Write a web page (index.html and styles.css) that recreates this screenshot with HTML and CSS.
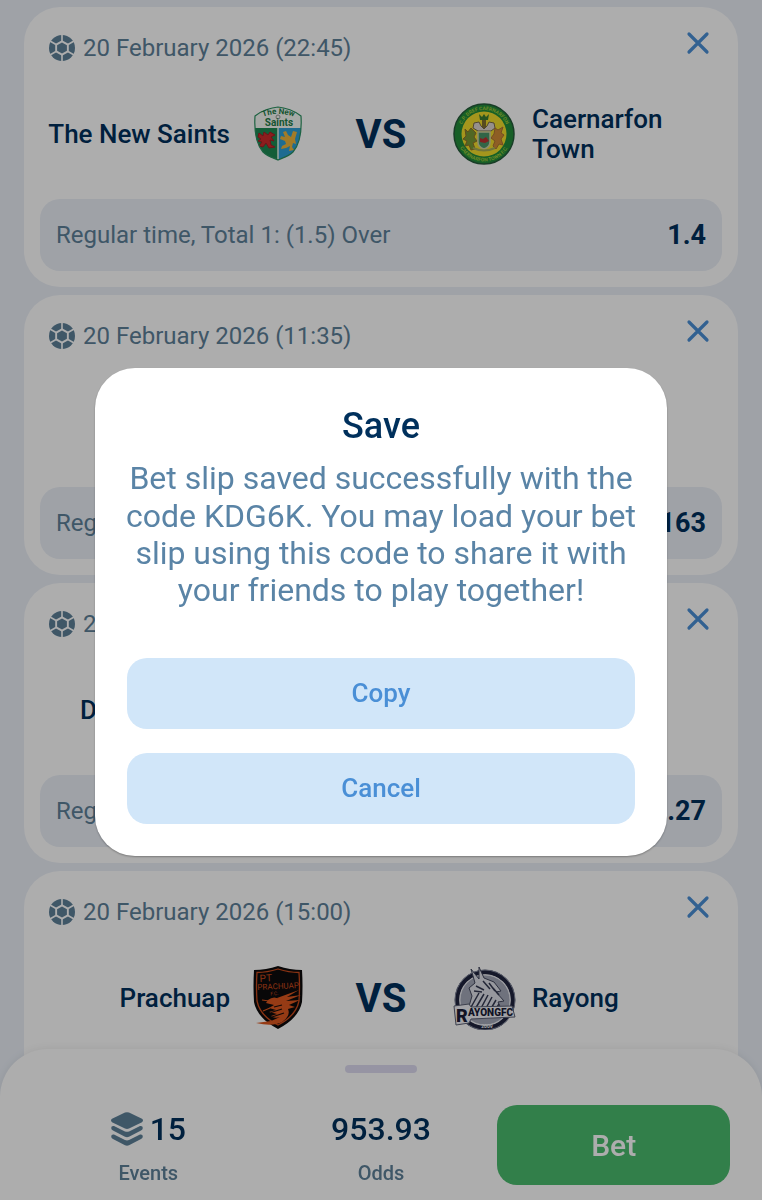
FILE: index.html
```html
<!DOCTYPE html>
<html lang="en">
<head>
<meta charset="utf-8">
<meta name="viewport" content="width=device-width, initial-scale=1">
<title>Bet slip</title>
<link rel="stylesheet" href="styles.css">
</head>
<body>
<svg class="sprite" aria-hidden="true">
  <symbol id="ball" viewBox="0 0 26 26">
    <circle cx="13" cy="13" r="13" fill="#5d8099"/>
    <path d="M13 5.2 19.8 9.1V16.9L13 20.8 6.2 16.9V9.1Z" fill="#fff"/>
    <path d="M13 0V6M13 20V26M19 9.5 25 6M19 16.5 25 20M7 9.5 1 6M7 16.5 1 20" stroke="#fff" stroke-width="1.6"/>
    <path d="M13 7.4 17.900 10.2V15.800L13 18.600 8.100 15.800V10.2Z" fill="#5d8099"/>
  </symbol>
  <symbol id="cross" viewBox="0 0 24 24">
    <path d="M3 3 21 21M21 3 3 21" stroke="#4a8fd6" stroke-width="3.2" stroke-linecap="round"/>
  </symbol>
</svg>

<main class="slip">
  <article class="card">
    <header class="card-head">
      <svg class="ball"><use href="#ball"/></svg>
      <time class="date">20 February 2026 (22:45)</time>
      <button class="close" aria-label="Remove event"><svg><use href="#cross"/></svg></button>
    </header>
    <div class="teams">
      <span class="team home">The New Saints</span>
      <svg class="crest" viewBox="0 0 64 64" role="img" aria-label="The New Saints crest">
        <path d="M32 5C25 5.500 15 9 9 14 8 30 11 43 17 50 22 55 28 56 32 58 36 56 42 55 47 50 53 43 56 30 55 14 49 9 39 5.500 32 5Z" fill="#f5faf5"/>
        <path d="M9 26H32V58C28 56 22 55 17 50 12 43 9 35 9 26Z" fill="#1c8a53"/>
        <path d="M32 26H55C55 35 52 43 47 50 42 55 36 56 32 58Z" fill="#2d9fd6"/>
        <path d="M13 31l4 3 1-4 4 3 2-3 5 3-4 2 3 4-4-1 1 5 4 2-6 1-3-5-3 4-4-1 3-4-4-1 3-2-3-2Z" fill="#cf2c2c" stroke="#a31e25"/>
        <path d="M37 30l3-1 2 4 3 2 2-6 4 1-2 7 1 5-3-1-1 4 2 3-5 1 1-5-4 2-5 1 1-3 4-2-1-3-5-2 1-3 4 1Z" fill="#efb63b"/>
        <path d="M32 26V57" stroke="#e3f3e4" stroke-width="1.500"/>
        <path d="M32 5C25 5.500 15 9 9 14 8 30 11 43 17 50 22 55 28 56 32 58 36 56 42 55 47 50 53 43 56 30 55 14 49 9 39 5.500 32 5Z" fill="none" stroke="#2b9160" stroke-width="1.200"/>
        <path id="saints-arc" d="M14 16Q32 8 51 16" fill="none"/>
        <text class="mark green small"><textPath href="#saints-arc" startOffset="50%" text-anchor="middle">The New</textPath></text>
        <circle cx="32" cy="15" r="2" fill="none" stroke="#999"/>
        <text class="mark green" x="33" y="24" text-anchor="middle">Saints</text>
      </svg>
      <span class="vs">VS</span>
      <svg class="crest" viewBox="0 0 64 64" role="img" aria-label="Caernarfon Town crest">
        <circle cx="32" cy="32" r="30" fill="#228c3a" stroke="#255b3a" stroke-width="1.500"/>
        <circle cx="32" cy="32" r="22.500" fill="#f2de2b"/>
        <path id="town-top" d="M8 32A24 24 0 0 1 56 32" fill="none"/>
        <path id="town-bottom" d="M4.500 32A27.500 27.500 0 0 0 59.500 32" fill="none"/>
        <text class="mark lime tiny"><textPath href="#town-top" startOffset="50%" text-anchor="middle">C.P. DREF CAERNARFON</textPath></text>
        <text class="mark lime tiny"><textPath href="#town-bottom" startOffset="50%" text-anchor="middle">CAERNARFON TOWN F.C.</textPath></text>
        <path d="M27 12l3 3 2-3 2 3 3-3-1 6h-8Z" fill="#3b7d30"/>
        <path d="M32 18v8" stroke="#80702f" stroke-width="4"/>
        <path d="M22 21l5-1 2 4 3 3 3-3 2-4 5 1 1 5-4 3H26l-5-3Z" fill="#ddd5cf" stroke="#76674a"/>
        <path d="M13 27l3 3 3-4 5 5-2 4 3 4-4 2 2 6-4 1-2-5-4 1 2-5-4-2 3-3Z" fill="#789834" stroke="#927028"/>
        <path d="M51 25l-5 3-3-2-1 6-3 4 4 3-2 5 3 3 3-5 4 1-2-6 3-4-3-2Z" fill="#d28b36" stroke="#ab7334"/>
        <path d="M26 30H38V40Q38 45 32 47 26 45 26 40Z" fill="#4b9569" stroke="#cfcfa5" stroke-width="1.500"/>
        <path d="M28 36l3 1 3-2 3 4-4 2-5-1Z" fill="#bd3030"/>
        <path d="M21 46Q32 51 43 46" fill="none" stroke="#a7ad56" stroke-width="2"/>
      </svg>
      <span class="team">Caernarfon Town</span>
    </div>
    <div class="pick"><span>Regular time, Total 1: (1.5) Over</span><strong>1.4</strong></div>
  </article>

  <article class="card">
    <header class="card-head">
      <svg class="ball"><use href="#ball"/></svg>
      <time class="date">20 February 2026 (11:35)</time>
      <button class="close" aria-label="Remove event"><svg><use href="#cross"/></svg></button>
    </header>
    <div class="teams"></div>
    <div class="pick"><span>Reg</span><strong>163</strong></div>
  </article>

  <article class="card">
    <header class="card-head">
      <svg class="ball"><use href="#ball"/></svg>
      <time class="date">2</time>
      <button class="close" aria-label="Remove event"><svg><use href="#cross"/></svg></button>
    </header>
    <div class="teams"><span class="team short">D</span></div>
    <div class="pick"><span>Reg</span><strong>.27</strong></div>
  </article>

  <article class="card">
    <header class="card-head">
      <svg class="ball"><use href="#ball"/></svg>
      <time class="date">20 February 2026 (15:00)</time>
      <button class="close" aria-label="Remove event"><svg><use href="#cross"/></svg></button>
    </header>
    <div class="teams">
      <span class="team home">Prachuap</span>
      <svg class="crest" viewBox="0 0 64 64" role="img" aria-label="Prachuap crest">
        <path d="M32 0Q44 4 56 4Q57 20 56 36Q53 52 32 63Q11 52 8 36 7 20 8 4 20 4 32 0Z" fill="#0d0b0c"/>
        <path d="M32 3Q43 6.500 53 6.500 54 20 53 35 50 50 32 59 14 50 11 35 10 20 11 6.500 21 6.500 32 3Z" fill="none" stroke="#c94a1c" stroke-width="1.300"/>
        <g transform="rotate(-3 32 18)">
          <text class="mark orange medium" x="14" y="15">PT</text>
          <text class="mark orange narrow" x="32" y="23" text-anchor="middle">PRACHUAP</text>
          <text class="mark orange tiny" x="24" y="29">F.C.</text>
        </g>
        <path d="M31 32 53 24 41 31 55 29 40 35 54 34 43 39 34 40Z" fill="#dd571f"/>
        <path d="M22 34Q28 29 35 34L40 38 49 41 42 43Q45 50 36 56 27 61 10 57L25 55 34 51Q28 53 25 50L31 48 23 46 30 44 23 42 28 39 20 37Z" fill="#dd571f"/>
        <path d="M25 46.500 36 43M26 51 38 47M28 41 36 39" stroke="#1a0e0b" stroke-width="1.200"/>
        <path d="M23 35 16 34M24 42 17 45" stroke="#dd571f" stroke-width="1.200"/>
      </svg>
      <span class="vs">VS</span>
      <svg class="crest" viewBox="0 0 64 64" role="img" aria-label="Rayong crest">
        <circle cx="33" cy="34" r="28" fill="none" stroke="#20243f" stroke-width="4.500"/>
        <circle cx="33" cy="34" r="30" fill="none" stroke="#858b9f" stroke-width="1"/>
        <circle cx="33" cy="34" r="25" fill="#a4a8b8" stroke="#e2e4ec"/>
        <path d="M15 47 20 30 17 22 23 17 19 3 27 13 27 1 32 12 42 16 49 25 44 26 52 35 46 36 51 47Z" fill="#dfe1e9" stroke="#42475d"/>
        <path d="M18 43 27 27M22 45 32 28M27 46 36 29M32 46 40 31M37 46 44 34M42 46 47 38M24 20l8 4M31 15l7 8M37 17l6 8M22 25l8 1M41 22l6 7" stroke="#343951" stroke-width="1.500"/>
        <path d="M2 40 17 38 19 41 60 40 63 51 19 53 17 57 4 59Z" fill="#f0f1f6" stroke="#5b6074"/>
        <text class="mark navy wide" x="4" y="56">R</text>
        <text class="mark navy medium" x="16" y="50">AYONGFC</text>
        <text class="mark white tiny" x="35" y="62" text-anchor="middle">2009</text>
      </svg>
      <span class="team">Rayong</span>
    </div>
    <div class="pick"></div>
  </article>
</main>

<footer class="sheet">
  <div class="handle"></div>
  <div class="summary">
    <div class="stat">
      <span class="value">
        <svg class="layers" viewBox="0 0 32 34" aria-hidden="true">
          <path d="M14 .6Q16 -.2 18 .6L31 6.800Q33 8.500 31 10.200L18 16.600Q16 17.400 14 16.600L1 10.200Q-1 8.500 1 6.800Z"/>
          <path d="M.2 16Q.2 13.500 3 14L14 19.400Q16 20.200 18 19.400L29 14Q31.800 13.500 31.800 16 31.800 17.600 30 18.600L18 24.800Q16 25.600 14 24.800L2 18.600Q.2 17.600 .2 16Z"/>
          <path d="M.2 24.500Q.2 22 3 22.500L14 28Q16 28.800 18 28L29 22.500Q31.800 22 31.800 24.500 31.800 26.100 30 27.100L18 33.300Q16 34.100 14 33.300L2 27.100Q.2 26.100 .2 24.500Z"/>
        </svg>15</span>
      <span class="label">Events</span>
    </div>
    <div class="stat">
      <span class="value">953.93</span>
      <span class="label">Odds</span>
    </div>
    <button class="bet">Bet</button>
  </div>
</footer>

<div class="overlay">
  <section class="modal" role="dialog" aria-modal="true" aria-labelledby="modal-title">
    <h1 id="modal-title">Save</h1>
    <p>Bet slip saved successfully with the code KDG6K. You may load your bet slip using this code to share it with your friends to play together!</p>
    <div class="actions">
      <button>Copy</button>
      <button>Cancel</button>
    </div>
  </section>
</div>
</body>
</html>
```
FILE: styles.css
```css
* { box-sizing: border-box; }

body {
  margin: 0;
  height: 100vh;
  overflow: hidden;
  background: #eaeff7;
  color: #00305c;
  font-family: Roboto, "Liberation Sans", sans-serif;
}

button {
  border: 0;
  padding: 0;
  font: inherit;
  cursor: pointer;
}

.sprite { position: absolute; width: 0; height: 0; }

.slip {
  display: flex;
  flex-direction: column;
  gap: 8px;
  padding: 7px 24px;
}

.card {
  padding: 16px;
  border-radius: 36px;
  background: #fff;
}

.card-head {
  display: flex;
  align-items: center;
  gap: 8px;
  height: 49px;
  padding: 0 4px 0 9px;
}

.ball { width: 26px; height: 26px; }

.date {
  flex: 1;
  color: #5d8099;
  font-size: 24px;
}

.close {
  display: grid;
  place-items: center;
  align-self: flex-start;
  width: 40px;
  height: 40px;
  background: none;
}

.close svg { width: 24px; height: 24px; }

.teams {
  display: grid;
  grid-template-columns: 1fr 64px 110px 64px 1fr;
  align-items: center;
  gap: 16px;
  height: 124px;
  margin-bottom: 3px;
}

.team {
  font-size: 26px;
  font-weight: 500;
  line-height: 30px;
}

.home { text-align: right; }
.short { justify-self: end; width: 150px; }

.crest { width: 64px; height: 64px; }

.vs {
  font-size: 40px;
  font-weight: 700;
  text-align: center;
}

.mark { font-family: Roboto, sans-serif; font-size: 10px; font-weight: 700; }
.small { font-size: 8px; }
.tiny { font-size: 5px; }
.narrow { font-size: 8px; }
.medium { font-size: 10px; }
.wide { font-size: 18px; }
.green { fill: #247c49; }
.lime { fill: #9fca38; }
.orange { fill: #c94a1c; font-weight: 400; }
.white { fill: #f3f4f8; }
.navy { fill: #1a1d36; font-weight: 900; }

.pick {
  display: flex;
  align-items: center;
  justify-content: space-between;
  height: 72px;
  padding: 0 16px;
  border-radius: 20px;
  background: #eaeff7;
  color: #5d8099;
  font-size: 24px;
}

.pick strong {
  color: #00305c;
  font-size: 27px;
  font-weight: 700;
}

.sheet {
  position: fixed;
  inset: auto 0 0;
  padding: 16px 32px 15px;
  border-radius: 48px 48px 0 0;
  background: #fff;
  box-shadow: 0 0 8px rgba(0, 0, 0, 0.08);
}

.handle {
  width: 72px;
  height: 8px;
  margin: 0 auto 32px;
  border-radius: 4px;
  background: #dddbf0;
}

.summary {
  display: grid;
  grid-template-columns: repeat(3, 1fr);
}

.stat {
  display: flex;
  flex-direction: column;
  align-items: center;
  gap: 12px;
  padding-top: 4px;
}

.value {
  display: flex;
  align-items: center;
  gap: 7px;
  font-size: 32px;
  font-weight: 500;
  line-height: 40px;
}

.layers { width: 32px; height: 34px; fill: #5d8099; }

.label {
  color: #5d8099;
  font-size: 20px;
  font-weight: 500;
  line-height: 24px;
}

.bet {
  height: 80px;
  border-radius: 20px;
  background: #4abb6d;
  color: #fff;
  font-size: 30px;
  font-weight: 500;
}

.overlay {
  position: fixed;
  inset: 0;
  display: grid;
  place-items: center;
  padding-top: 24px;
  background: rgba(0, 0, 0, 0.32);
}

.modal {
  width: 75%;
  padding: 32px 24px;
  border-radius: 40px;
  background: #fff;
  box-shadow: 0 1px 2px rgba(0, 0, 0, 0.3);
  text-align: center;
}

.modal h1 {
  margin: 0 0 8px;
  font-size: 36px;
  font-weight: 500;
  line-height: 52px;
}

.modal p {
  margin: 0 0 48px;
  color: #5a84a6;
  font-size: 32px;
  line-height: 1.17;
}

.actions {
  display: grid;
  gap: 24px;
  padding: 0 8px;
}

.actions button {
  height: 71px;
  border-radius: 20px;
  background: #d1e6f9;
  color: #4a8fd6;
  font-size: 26px;
  font-weight: 500;
}
```
